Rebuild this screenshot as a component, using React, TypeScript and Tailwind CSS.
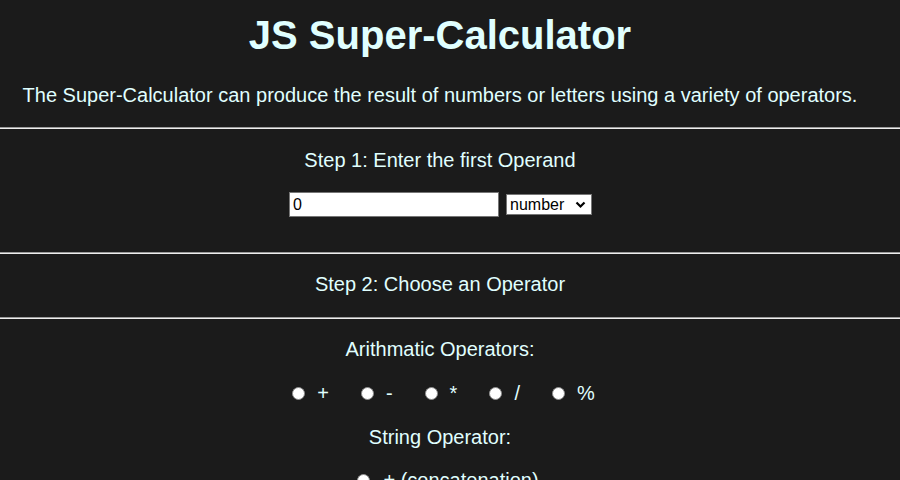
import React from "react";

function Hr() {
  return <div className="h-0 w-full border-t border-b border-t-[#9a9a9a] border-b-[#eeeeee]" />;
}

function Radio() {
  return (
    <span className="inline-block shrink-0 w-[13px] h-[13px] rounded-full bg-white border border-[#8f8f8f]" />
  );
}

export default function App() {
  const ops = ["+", "-", "*", "/", "%"];
  return (
    <div className="bg-[#1b1b1b] text-[#e0ffff] text-[20px] leading-[23px] text-center font-['Liberation_Sans',Arial,sans-serif] overflow-hidden h-[480px]">
      <h1 className="text-[40px] font-bold leading-[46px] pt-[12px] pr-[20px]">JS Super-Calculator</h1>
      <p className="mt-[26px] pr-[20px]">
        The Super-Calculator can produce the result of numbers or letters using a variety of operators.
      </p>
      <div className="mt-[20px]">
        <Hr />
      </div>
      <p className="mt-[20px] pr-[20px]">Step 1: Enter the first Operand</p>
      <div className="mt-[20px] flex justify-center items-center gap-[7px] pr-[19px]">
        <div className="w-[210px] h-[25px] bg-white border border-[#767676] text-black text-[16px] text-left pl-[3px] leading-[23px]">0</div>
        <div className="w-[86px] h-[21px] bg-white border border-[#767676] text-black text-[16px] leading-[19px] flex items-center justify-between pl-[3px] pr-[5px]">
          <span>number</span>
          <svg width="11" height="8" viewBox="0 0 11 8"><path d="M1.5 1.5 L5.5 5.5 L9.5 1.5" stroke="#000" strokeWidth="2.2" fill="none" /></svg>
        </div>
      </div>
      <div className="mt-[35px]">
        <Hr />
      </div>
      <p className="mt-[19px] pr-[20px]">Step 2: Choose an Operator</p>
      <div className="mt-[21px]">
        <Hr />
      </div>
      <p className="mt-[19px] pr-[20px]">Arithmatic Operators:</p>
      <div className="mt-[21px] flex justify-center items-center pr-[13px]">
        {ops.map((o, i) => (
          <span key={i} className={"flex items-center " + (i < 4 ? "mr-[32px]" : "")}>
            <Radio />
            <span className="ml-[12px]">{o}</span>
          </span>
        ))}
      </div>
      <p className="mt-[21px] pr-[20px]">String Operator:</p>
      <div className="mt-[20px] flex justify-center items-center pr-[4px]">
        <Radio />
        <span className="ml-[13px]">+ (concatenation)</span>
      </div>
    </div>
  );
}
